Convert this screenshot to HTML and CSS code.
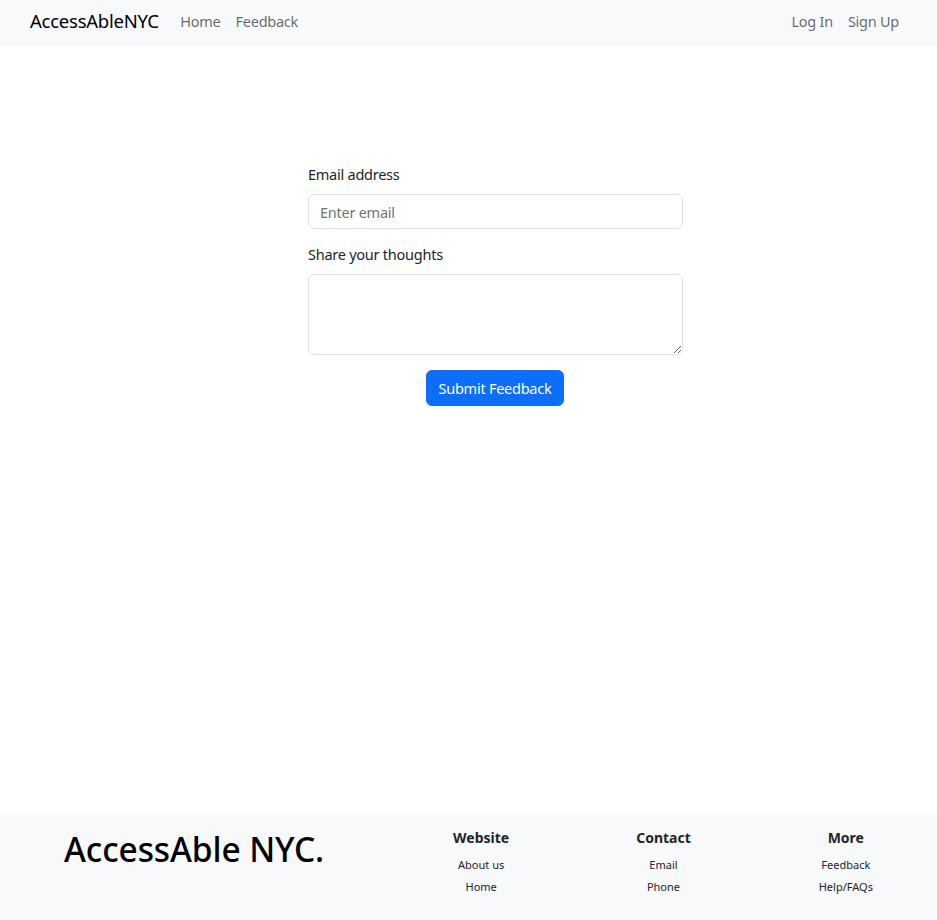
FILE: index.html
```html
<!DOCTYPE html>
<html lang="en">
<head>
<meta charset="utf-8">
<title>AccessAbleNYC - Feedback</title>
<link rel="stylesheet" href="styles.css">
</head>
<body>
<div class="page">
  <nav class="navbar">
    <a class="brand" href="#">AccessAbleNYC</a>
    <ul class="nav-left">
      <li><a href="#">Home</a></li>
      <li><a href="#">Feedback</a></li>
    </ul>
    <ul class="nav-right">
      <li><a href="#">Log In</a></li>
      <li><a href="#">Sign Up</a></li>
    </ul>
  </nav>
  <main class="main">
    <form class="feedback-form">
      <label class="form-label" for="email">Email address</label>
      <input class="form-control" id="email" type="email" placeholder="Enter email">
      <label class="form-label second" for="thoughts">Share your thoughts</label>
      <textarea class="form-control textarea" id="thoughts"></textarea>
      <div class="actions">
        <button class="btn" type="button">Submit Feedback</button>
      </div>
    </form>
  </main>
  <footer class="footer">
    <div class="footer-brand">AccessAble NYC.</div>
    <div class="footer-col">
      <h5>Website</h5>
      <a href="#">About us</a>
      <a href="#">Home</a>
    </div>
    <div class="footer-col">
      <h5>Contact</h5>
      <a href="#">Email</a>
      <a href="#">Phone</a>
    </div>
    <div class="footer-col">
      <h5>More</h5>
      <a href="#">Feedback</a>
      <a href="#">Help/FAQs</a>
    </div>
  </footer>
</div>
</body>
</html>
```

FILE: styles.css
```css
* { box-sizing: border-box; }
html, body { margin: 0; padding: 0; }
body {
  font-family: "Noto Sans", "Open Sans", sans-serif;
  color: #212529;
  background: #fff;
  font-size: 14.5px;
}
a { text-decoration: none; }
.page {
  min-height: 920px;
  display: flex;
  flex-direction: column;
}
.navbar {
  height: 46px;
  background: #f8f9fa;
  display: flex;
  align-items: center;
  padding: 0 30px 5px 30px;
}
.brand {
  font-size: 18.5px;
  color: #000;
  margin-right: 14px;
  letter-spacing: -0.25px;
}
.nav-left, .nav-right {
  list-style: none;
  margin: 0;
  padding: 0;
  display: flex;
}
.nav-right { margin-left: auto; }
.nav-left a, .nav-right a {
  display: block;
  padding: 0 7.5px;
  font-size: 14.5px;
  letter-spacing: -0.25px;
  color: rgba(0,0,0,0.6);
}
.nav-right li:last-child a { padding-right: 8px; }
.main {
  flex: 1;
  display: flex;
  justify-content: center;
  padding-top: 117px;
  padding-left: 54px;
}
.feedback-form {
  width: 375px;
  display: flex;
  flex-direction: column;
}
.form-label {
  font-size: 14.5px;
  letter-spacing: -0.25px;
  line-height: 22px;
  margin-bottom: 9px;
}
.form-label.second { margin-top: 14px; }
.form-control {
  width: 100%;
  height: 35px;
  border: 1px solid #dee2e6;
  border-radius: 6px;
  padding: 0 11px;
  font-family: inherit;
  font-size: 14.5px;
  letter-spacing: -0.25px;
  color: #212529;
  background: #fff;
}
.form-control::placeholder { color: #6c757d; }
.textarea {
  height: 81px;
  resize: vertical;
  padding: 6px 11px;
}
.actions {
  display: flex;
  justify-content: center;
  margin-top: 15px;
}
.btn {
  width: 138px;
  height: 36px;
  background: #0d6efd;
  border: 1px solid #0d6efd;
  border-radius: 6px;
  color: #fff;
  font-family: inherit;
  font-size: 14.5px;
  letter-spacing: -0.25px;
  padding: 0;
  margin-right: 1px;
}
.footer {
  height: 107px;
  background: #f8f9fa;
  display: grid;
  grid-template-columns: 390px 1fr 1fr 1fr;
  align-items: start;
}
.footer-brand {
  padding: 14px 0 0 64px;
  font-size: 33.5px;
  font-weight: 500;
  color: #000;
  line-height: 44px;
  letter-spacing: -0.1px;
}
.footer-col {
  display: flex;
  flex-direction: column;
  align-items: center;
  padding-top: 16px;
}
.footer-col h5 {
  margin: 0 0 7px;
  font-size: 14px;
  font-weight: 700;
  line-height: 18px;
}
.footer-col a {
  font-size: 11px;
  color: #212529;
  line-height: 22px;
}
```
